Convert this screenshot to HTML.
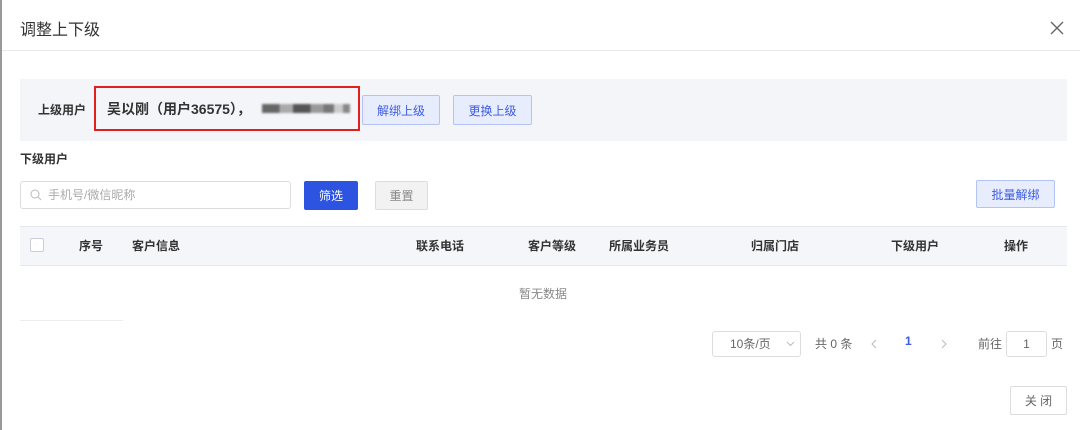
<!DOCTYPE html><html><head><meta charset="utf-8"><style>
*{box-sizing:border-box;margin:0;padding:0}
body{width:1080px;height:430px;background:#fff;font-family:"Liberation Sans","Noto Sans CJK SC",sans-serif;position:relative;overflow:hidden;color:#333}
.a{position:absolute;white-space:nowrap}
.btn{position:absolute;display:flex;align-items:center;justify-content:center;font-size:12px;border-radius:2px}
.lb{background:#e8edfd;border:1px solid #b4c3f5;color:#3d5ce0}
.th{position:absolute;top:237px;font-size:12px;font-weight:bold;color:#333}
</style></head><body>
<div class="a" style="left:0;top:0;width:2px;height:430px;background:#999"></div>
<div class="a" style="left:20px;top:16px;font-size:16px;color:#333">调整上下级</div>
<svg class="a" style="left:1050px;top:21px" width="14" height="14"><path d="M1 1L13 13M13 1L1 13" stroke="#666" stroke-width="1.4"/></svg>
<div class="a" style="left:2px;top:50px;width:1078px;height:1px;background:#e8e8e8"></div>
<div class="a" style="left:20px;top:79px;width:1047px;height:62px;background:#f4f5f9"></div>
<div class="a" style="left:38px;top:101px;font-size:12px;font-weight:bold">上级用户</div>
<div class="a" style="left:94px;top:86px;width:266px;height:45px;border:2px solid #e02020"></div>
<div class="a" style="left:107px;top:99px;font-size:14px;font-weight:bold;color:#333">吴以刚（用户36575），</div>
<div class="a" style="left:262px;top:104px;width:88px;height:9px;background:linear-gradient(90deg,#666 0 20%,#aaa 20% 35%,#555 35% 55%,#999 55% 70%,#777 70% 82%,#ccc 82% 92%,#888 92%);filter:blur(1px)"></div>
<div class="btn lb" style="left:362px;top:95px;width:78px;height:30px">解绑上级</div>
<div class="btn lb" style="left:453px;top:95px;width:79px;height:30px">更换上级</div>
<div class="a" style="left:20px;top:150px;font-size:12px;font-weight:bold">下级用户</div>
<div class="a" style="left:20px;top:181px;width:271px;height:28px;border:1px solid #ddd;border-radius:3px"></div>
<svg class="a" style="left:30px;top:189px" width="12" height="12"><circle cx="5" cy="5" r="4" fill="none" stroke="#bbb"/><path d="M8 8L11 11" stroke="#bbb"/></svg>
<div class="a" style="left:48px;top:186px;font-size:12px;color:#aaa">手机号/微信昵称</div>
<div class="btn" style="left:304px;top:181px;width:54px;height:29px;background:#2c54e0;color:#fff">筛选</div>
<div class="btn" style="left:375px;top:181px;width:53px;height:29px;background:#f2f2f2;border:1px solid #ddd;color:#888">重置</div>
<div class="btn lb" style="left:976px;top:180px;width:79px;height:28px">批量解绑</div>
<div class="a" style="left:20px;top:226px;width:1047px;height:40px;background:#f5f6fa;border-top:1px solid #e6e8ee;border-bottom:1px solid #e6e8ee"></div>
<div class="a" style="left:30px;top:238px;width:14px;height:14px;border:1px solid #ccd;background:#fff;border-radius:2px"></div>
<div class="th" style="left:79px">序号</div><div class="th" style="left:132px">客户信息</div><div class="th" style="left:416px">联系电话</div><div class="th" style="left:528px">客户等级</div><div class="th" style="left:609px">所属业务员</div><div class="th" style="left:751px">归属门店</div><div class="th" style="left:891px">下级用户</div><div class="th" style="left:1004px">操作</div>
<div class="a" style="left:519px;top:285px;font-size:12px;color:#888">暂无数据</div>
<div class="a" style="left:20px;top:320px;width:103px;height:1px;background:#eee"></div>
<div class="a" style="left:712px;top:331px;width:89px;height:26px;border:1px solid #ddd;border-radius:3px"></div>
<div class="a" style="left:730px;top:335px;font-size:12px;color:#666">10条/页</div>
<svg class="a" style="left:786px;top:341px" width="9" height="6"><path d="M1 1L4.5 4.5L8 1" fill="none" stroke="#bbb"/></svg>
<div class="a" style="left:815px;top:335px;font-size:12px;color:#666">共 0 条</div>
<svg class="a" style="left:871px;top:339px" width="6" height="10"><path d="M5 1L1 5L5 9" fill="none" stroke="#bbb"/></svg>
<div class="a" style="left:905px;top:334px;font-size:12px;font-weight:bold;color:#3d5ce0">1</div>
<svg class="a" style="left:941px;top:339px" width="6" height="10"><path d="M1 1L5 5L1 9" fill="none" stroke="#bbb"/></svg>
<div class="a" style="left:978px;top:335px;font-size:12px;color:#666">前往</div>
<div class="a" style="left:1006px;top:331px;width:41px;height:26px;border:1px solid #ddd;border-radius:3px;font-size:12px;color:#666;text-align:center;line-height:24px">1</div>
<div class="a" style="left:1051px;top:335px;font-size:12px;color:#666">页</div>
<div class="btn" style="left:1010px;top:386px;width:57px;height:29px;border:1px solid #ddd;color:#666">关 闭</div>
</body></html>
